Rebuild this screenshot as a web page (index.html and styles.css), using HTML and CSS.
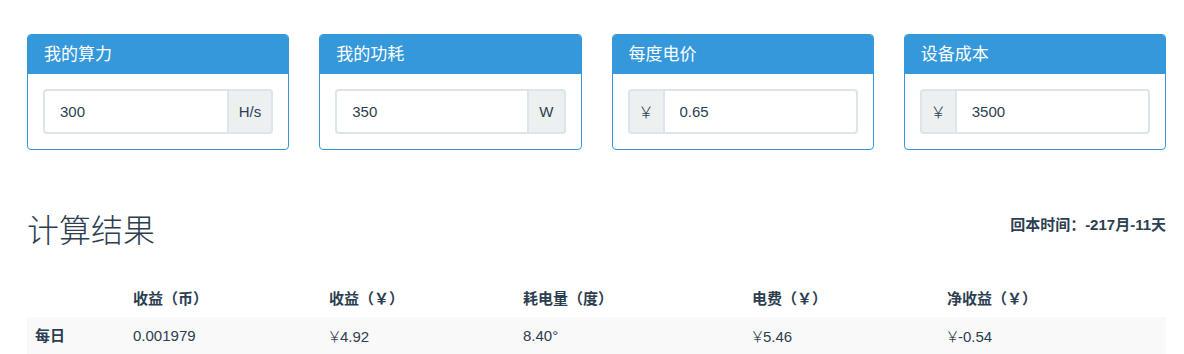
FILE: index.html
```html
<!DOCTYPE html>
<html lang="zh-CN">
<head>
<meta charset="utf-8">
<title>计算器</title>
<link rel="stylesheet" href="styles.css">
</head>
<body>
<div class="container">
  <div class="panels">
    <div class="panel">
      <div class="panel-heading">我的算力</div>
      <div class="panel-body">
        <div class="input-group">
          <input class="form-control" type="text" value="300">
          <span class="addon addon-right">H/s</span>
        </div>
      </div>
    </div>
    <div class="panel">
      <div class="panel-heading">我的功耗</div>
      <div class="panel-body">
        <div class="input-group">
          <input class="form-control" type="text" value="350">
          <span class="addon addon-right">W</span>
        </div>
      </div>
    </div>
    <div class="panel">
      <div class="panel-heading">每度电价</div>
      <div class="panel-body">
        <div class="input-group">
          <span class="addon addon-left yen">￥</span>
          <input class="form-control" type="text" value="0.65">
        </div>
      </div>
    </div>
    <div class="panel">
      <div class="panel-heading">设备成本</div>
      <div class="panel-body">
        <div class="input-group">
          <span class="addon addon-left yen">￥</span>
          <input class="form-control" type="text" value="3500">
        </div>
      </div>
    </div>
  </div>

  <div class="result-head">
    <h2 class="result-title">计算结果</h2>
    <div class="payback">回本时间：-217月-11天</div>
  </div>

  <table class="result-table">
    <colgroup>
      <col class="c1"><col class="c2"><col class="c3"><col class="c4"><col class="c5"><col class="c6">
    </colgroup>
    <thead>
      <tr>
        <th></th>
        <th>收益（币）</th>
        <th>收益（￥）</th>
        <th>耗电量（度）</th>
        <th>电费（￥）</th>
        <th>净收益（￥）</th>
      </tr>
    </thead>
    <tbody>
      <tr class="striped">
        <th>每日</th>
        <td>0.001979</td>
        <td><span class="y">￥</span>4.92</td>
        <td>8.40°</td>
        <td><span class="y">￥</span>5.46</td>
        <td><span class="y">￥</span>-0.54</td>
      </tr>
    </tbody>
  </table>
</div>
</body>
</html>
```

FILE: styles.css
```css
* { box-sizing: border-box; }

html, body {
  margin: 0;
  padding: 0;
  background: #ffffff;
}

body {
  font-family: "Liberation Sans", Arial, "Noto Sans CJK SC", sans-serif;
  font-size: 15px;
  line-height: 1.42857;
  color: #2c3e50;
}

.container {
  width: 1166px;
  padding-left: 27px;
  padding-top: 34px;
}

.panels {
  display: grid;
  grid-template-columns: repeat(4, 1fr);
  column-gap: 30px;
}

.panel {
  border: 1px solid #3498db;
  border-radius: 4px;
  background: #fff;
  overflow: hidden;
}

.panel-heading {
  background: #3498db;
  color: #fff;
  font-size: 17px;
  line-height: 19px;
  padding: 10px 15px 10px 16px;
  height: 39px;
}

.panel-body {
  padding: 15px;
}

.input-group {
  display: flex;
  height: 45px;
}

.form-control {
  flex: 1 1 auto;
  min-width: 0;
  height: 45px;
  border: 2px solid #dce4ec;
  padding: 10px 15px;
  font-family: inherit;
  font-size: 15px;
  color: #2c3e50;
  background: #fff;
  outline: none;
  margin: 0;
}

.input-group .form-control:first-child {
  border-radius: 4px 0 0 4px;
  border-right: 0;
}

.input-group .form-control:last-child {
  border-radius: 0 4px 4px 0;
  border-left: 0;
}

.addon {
  flex: 0 0 auto;
  display: flex;
  align-items: center;
  justify-content: center;
  background: #ecf0f1;
  border: 2px solid #dce4ec;
  padding: 0 10px;
  font-size: 15px;
  color: #2c3e50;
}

.addon-right {
  border-radius: 0 4px 4px 0;
}

.addon-left {
  border-radius: 4px 0 0 4px;
  width: 37px;
  padding: 0;
}

.yen {
  font-family: "Noto Sans CJK SC", sans-serif;
  font-size: 16px;
  font-weight: 300;
  color: #2c3e50;
}

.result-head {
  display: flex;
  justify-content: space-between;
  align-items: flex-start;
  margin-top: 61px;
}

.result-title {
  margin: 0;
  font-size: 32px;
  line-height: 35px;
  font-weight: 300;
  font-family: "Noto Sans CJK SC", sans-serif;
  color: #2c3e50;
}

.payback {
  font-weight: 700;
  font-size: 15px;
  line-height: 21px;
  margin-top: 3px;
}

.result-table {
  margin-top: 34px;
  width: 1139px;
  border-collapse: collapse;
  border-spacing: 0;
  table-layout: fixed;
}

.c1 { width: 98px; }
.c2 { width: 196px; }
.c3 { width: 194px; }
.c4 { width: 229px; }
.c5 { width: 195px; }
.c6 { width: 227px; }

.result-table th,
.result-table td {
  text-align: left;
  padding: 8px;
  line-height: 21px;
  vertical-align: top;
}

.result-table thead th {
  font-weight: 700;
}

.result-table tbody th {
  font-weight: 700;
}

.striped {
  background: #f9f9f9;
}

.y {
  font-family: "Noto Sans CJK SC", sans-serif;
  font-weight: 300;
  font-size: 15px;
  margin-left: -2px;
  margin-right: -2px;
}
```
